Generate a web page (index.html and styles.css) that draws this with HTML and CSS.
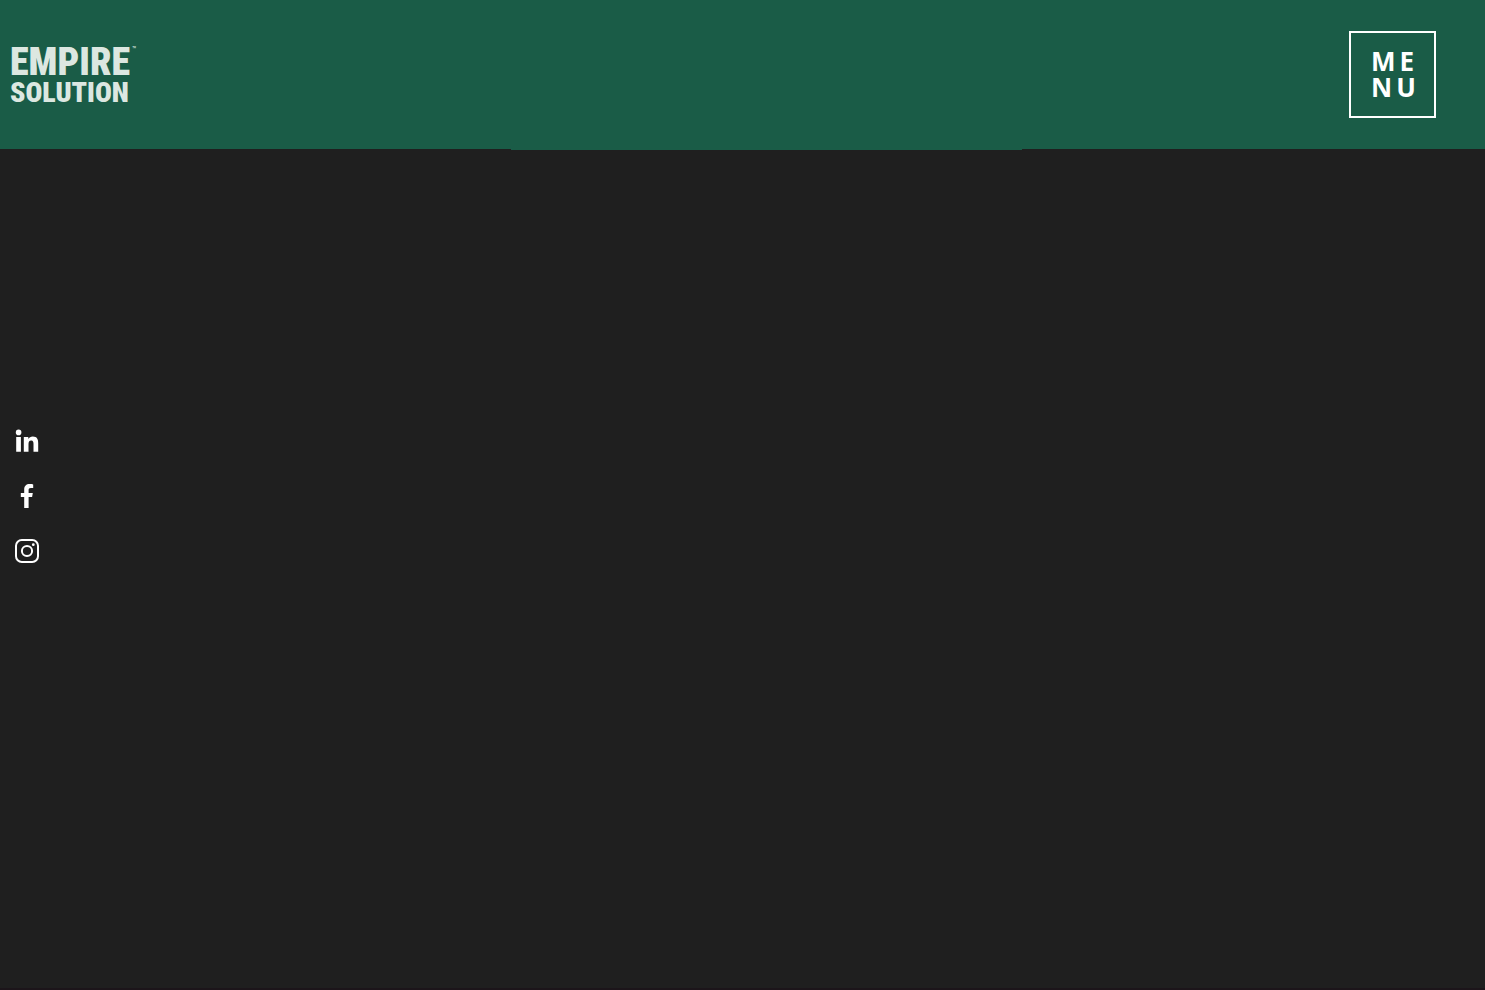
FILE: index.html
```html
<!DOCTYPE html>
<html lang="en">

<head>
    <meta charset="UTF-8">
    <meta name="viewport" content="width=device-width, initial-scale=1.0">
    <title>Empire Solution</title>
    <link rel="stylesheet" href="styles.css">
</head>

<body>

    <header>
        <a href="#" class="logo">
            <span class="logo-top">EMPIRE<span class="logo-mark">™</span></span>
            <span class="logo-bottom">SOLUTION</span>
        </a>
        <button type="button" class="menu-button">ME<br>NU</button>
    </header>

    <main>
        <nav class="socials" aria-label="Social links">
            <a href="#" aria-label="LinkedIn">
                <svg viewBox="0 0 24 24" fill="currentColor">
                    <circle cx="3.6" cy="3.4" r="2.8" />
                    <path d="M1.2 8h4.7v14.8H1.2zM8.8 8h4.5v2c.8-1.4 2.4-2.4 4.5-2.4 4.4 0 5.4 2.9 5.4 6.7v8.5h-4.7v-7.5c0-1.9-.2-3.7-2.3-3.7s-2.7 1.5-2.7 3.6v7.6H8.8z" />
                </svg>
            </a>
            <a href="#" aria-label="Facebook">
                <svg viewBox="0 0 24 24" fill="currentColor">
                    <path d="M9.2 24V13H5.8V8.9h3.4V5.6C9.2 2 11.3.1 14.6.1c1.5 0 2.9.2 3.6.3v3.7h-2.3c-1.8 0-2.3.9-2.3 2.1v2.7h4.2l-.7 4.1h-3.5v11z" />
                </svg>
            </a>
            <a href="#" aria-label="Instagram">
                <svg viewBox="0 0 24 24" fill="none" stroke="currentColor" stroke-width="2">
                    <rect x="1" y="1" width="22" height="22" rx="5.8" />
                    <circle cx="12" cy="12" r="5.1" />
                    <circle cx="18.3" cy="5.7" r="1.4" fill="currentColor" stroke="none" />
                </svg>
            </a>
        </nav>
    </main>

</body>

</html>
```

FILE: styles.css
```css
* {
    box-sizing: border-box;
}

body {
    margin: 0;
    min-height: 100vh;
    display: flex;
    flex-direction: column;
    background-color: #1f1f1f;
    border-bottom: 2px solid #1c151a;
    font-family: "Open Sans", sans-serif;
    color: white;
}

/* Header */
header {
    position: relative;
    display: flex;
    justify-content: space-between;
    align-items: center;
    height: 149px;
    padding: 0 49px 0 10px;
    background-color: #1a5c47;
}

/* thin strip under the middle of the header */
header::after {
    content: "";
    position: absolute;
    top: 100%;
    left: 34.4%;
    width: 34.4%;
    height: 1px;
    background-color: #1a5c47;
}

.logo {
    display: flex;
    flex-direction: column;
    padding-top: 2px;
    font-family: "Roboto Condensed", Roboto, sans-serif;
    font-weight: 900;
    color: #dce7e1;
    text-decoration: none;
}

.logo-top {
    display: flex;
    font-size: 38px;
    line-height: 34px;
}

.logo-mark {
    padding-left: 2px;
    font-size: 8px;
    line-height: 10px;
    font-weight: normal;
}

.logo-bottom {
    font-size: 28px;
    line-height: 28px;
}

.menu-button {
    width: 87px;
    height: 87px;
    padding: 0 0 2px 20px;
    background: none;
    border: 2px solid white;
    color: white;
    font-family: "Open Sans", sans-serif;
    font-size: 26px;
    font-weight: 700;
    line-height: 26px;
    letter-spacing: 4px;
    text-align: left;
    cursor: pointer;
}

/* Social links */
main {
    flex: 1;
    padding: 280px 15px 0;
}

.socials {
    display: flex;
    flex-direction: column;
    align-items: flex-start;
    gap: 31px;
}

.socials a {
    display: block;
    color: white;
}

.socials svg {
    display: block;
    width: 24px;
    height: 24px;
}
```
